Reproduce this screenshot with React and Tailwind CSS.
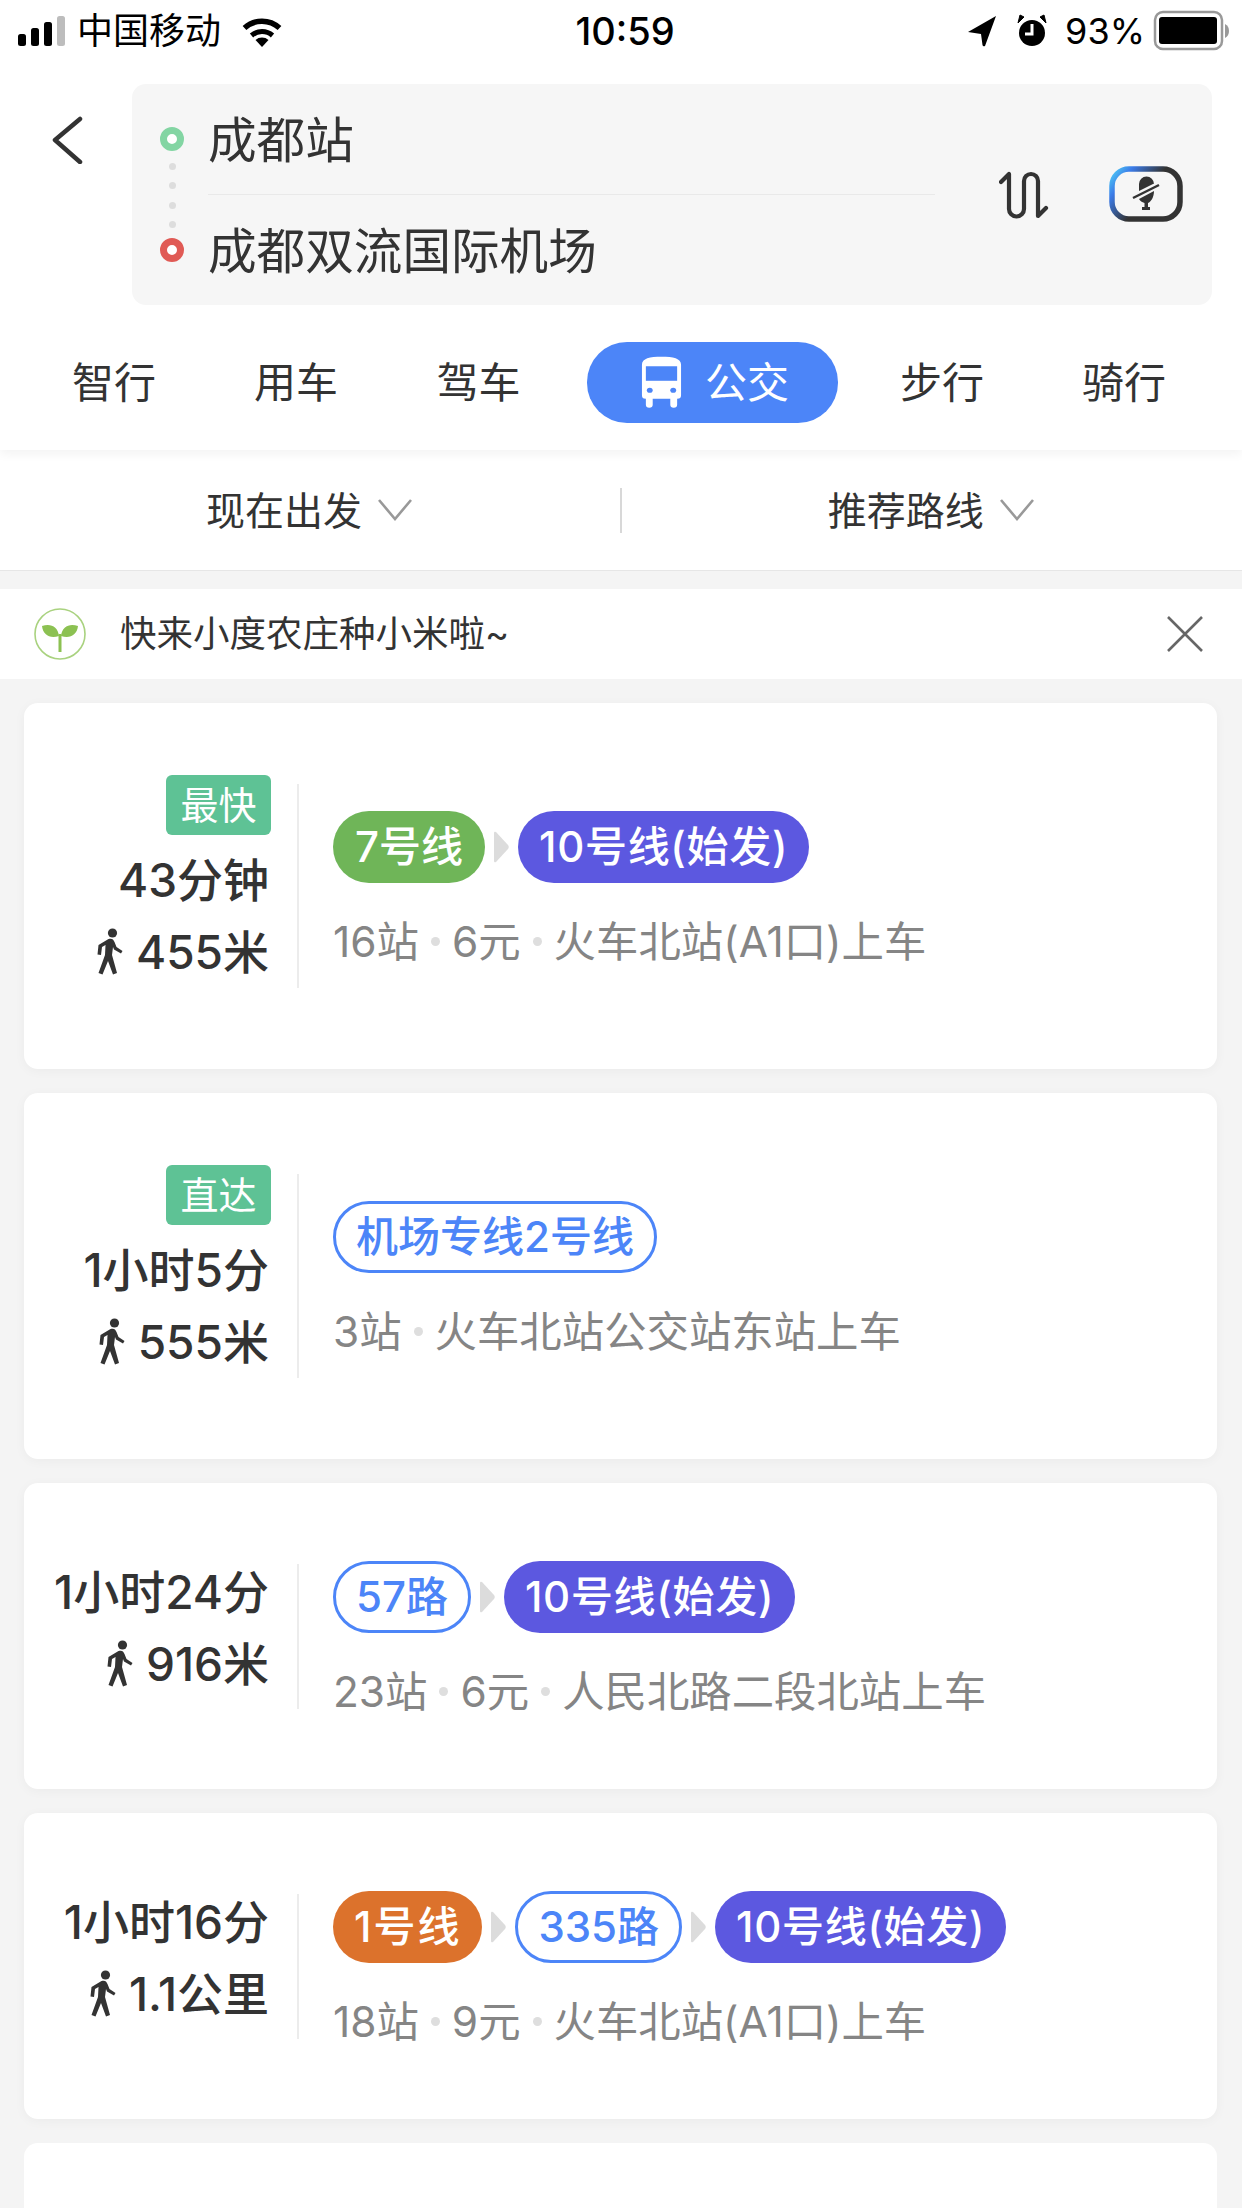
function Signal() {
  return (
    <svg width="48" height="32" viewBox="0 0 48 32" className="block">
      <rect x="0" y="19" width="8" height="12" rx="2.5" fill="#000" />
      <rect x="13" y="13" width="8" height="18" rx="2.5" fill="#000" />
      <rect x="26" y="7" width="8" height="24" rx="2.5" fill="#000" />
      <rect x="39" y="1" width="8" height="30" rx="2.5" fill="#bdbdbd" />
    </svg>
  );
}
function Wifi() {
  return (
    <svg width="42" height="34" viewBox="0 0 42 34" className="block ml-[20px]">
      <path d="M21 33 L14.5 26 A10 10 0 0 1 27.5 26 Z" fill="#000" />
      <path d="M10.5 21.5 A16 16 0 0 1 31.5 21.5" fill="none" stroke="#000" strokeWidth="5" />
      <path d="M3.5 14 A26 26 0 0 1 38.5 14" fill="none" stroke="#000" strokeWidth="5.5" />
    </svg>
  );
}
function Walk({ className = "" }) {
  return (
    <svg width="28" height="48" viewBox="0 0 27 48" className={className} fill="#333">
      <circle cx="16" cy="5" r="4.6" />
      <path d="M12 11 C15 10 17 11 18 14 L20 19 L26 23 L24.5 25.5 L17.5 21.5 L16.5 19 L15.5 27 L20.5 45 L16.5 46.5 L11.5 33 L6 46.5 L2 45 L8.5 27 L9 17 L5.5 19 L4.5 27 L1 26.5 L2 17 Z" />
    </svg>
  );
}
function Arrow() {
  return (
    <svg width="15" height="32" viewBox="0 0 15 32" className="mx-[9px] shrink-0" fill="#dcdcdc">
      <path d="M0 2 Q0 0 2 1 L14 14 Q15.5 16 14 18 L2 31 Q0 32 0 30 Z" />
    </svg>
  );
}
function Dot() {
  return <span className="inline-block w-[9px] h-[9px] rounded-full bg-[#dedede] mx-[12px] mb-[6px] align-middle" />;
}
function Pill({ children, color }) {
  const styles = {
    green: "px-[22px] bg-[#6fb558] text-white",
    purple: "px-[21px] tracking-[0.7px] bg-[#5c58e0] text-white",
    orange: "px-[21px] tracking-[2px] bg-[#dc722c] text-white",
    blue: "px-[20px] bg-white text-[#4c85f8] border-[3px] border-[#4c85f8]",
  };
  return (
    <div className={`h-[72px] rounded-[36px] flex items-center text-[42px] font-medium leading-none whitespace-nowrap shrink-0 ${styles[color]}`}>
      {children}
    </div>
  );
}
function Card({ badge, time, dist, lines, sub, short }) {
  return (
    <div className={`mx-[24px] w-[1193px] ${short ? "h-[306px]" : "h-[366px]"} bg-white rounded-[14px] shadow-[0_2px_12px_rgba(0,0,0,0.04)] flex items-center shrink-0`}>
      <div className={`w-[275px] ${badge ? "h-[204px]" : "h-[145px] pb-[9px]"} border-r-[2.5px] border-[#ececec] pr-[28px] flex flex-col items-end justify-end text-[46px] font-medium text-[#333] leading-[72px] whitespace-nowrap`}>
        {badge && (
          <div className="w-[105px] h-[60px] -mr-[2px] mb-[9px] rounded-[6px] bg-[#5ec295] text-white text-[38px] font-normal leading-[60px] text-center">
            {badge}
          </div>
        )}
        <div>{time}</div>
        <div className="flex items-center">
          <Walk className="mr-[12px]" />
          {dist}
        </div>
      </div>
      <div className="pl-[34px] pt-[3px] flex flex-col">
        <div className="flex items-center">
          {lines.map((l, i) => (
            <div key={i} className="flex items-center">
              {i > 0 && <Arrow />}
              <Pill color={l[1]}>{l[0]}</Pill>
            </div>
          ))}
        </div>
        <div className="mt-[36px] text-[42.4px] leading-[46px] text-[#858585] whitespace-nowrap">
          {sub.map((s, i) => (
            <span key={i}>
              {i > 0 && <Dot />}
              {s}
            </span>
          ))}
        </div>
      </div>
    </div>
  );
}
function Chevron() {
  return (
    <svg width="34" height="22" viewBox="0 0 34 22" className="ml-[16px]" fill="none" stroke="#999" strokeWidth="2.6">
      <path d="M1 1 L17 20 L33 1" />
    </svg>
  );
}
export default function App() {
  return (
    <div className="w-[1242px] h-[2208px] overflow-hidden bg-[#f4f4f4] flex flex-col font-['Inter','Noto_Sans_CJK_SC',sans-serif]">
      <div className="bg-white h-[450px] shrink-0 flex flex-col shadow-[0_4px_10px_rgba(0,0,0,0.05)] relative z-10">
        {/* status bar */}
        <div className="h-[62px] flex items-center px-[18px] text-[36px] text-black leading-none">
          <div className="flex-1 flex items-center">
            <Signal />
            <span className="ml-[11px]">中国移动</span>
            <Wifi />
          </div>
          <div className="font-medium text-[38px] ml-[8px]">10:59</div>
          <div className="flex-1 flex items-center justify-end">
            <svg width="28" height="32" viewBox="0 0 28 32">
              <path d="M0 17 L28 1 L17 31 Q15 32 14.5 30 L13 19 Z" fill="#000" />
            </svg>
            <svg width="30" height="34" viewBox="0 0 30 34" className="ml-[21px]">
              <circle cx="15" cy="19" r="13" fill="#000" />
              <path d="M15 10 V20 H8" stroke="#fff" strokeWidth="3" fill="none" />
              <path d="M1 9 L7 3 L3 1 Z M29 9 L23 3 L27 1 Z" fill="#000" stroke="#000" strokeWidth="1" />
            </svg>
            <span className="ml-[18px]">93%</span>
            <svg width="77" height="42" viewBox="0 0 77 42" className="ml-[8px] mr-[-6px]">
              <rect x="2" y="2" width="67" height="37" rx="8" fill="none" stroke="#999" strokeWidth="2.5" />
              <rect x="6" y="7" width="58" height="27" rx="3" fill="#000" />
              <path d="M72 14 Q76 16 76 21 Q76 26 72 28 Z" fill="#999" />
            </svg>
          </div>
        </div>
        {/* search */}
        <div className="mt-[22px] flex items-start pr-[30px]">
          <div className="w-[132px] pl-[52px] pt-[32px] shrink-0">
            <svg width="32" height="48" viewBox="0 0 32 48" fill="none" stroke="#333" strokeWidth="4.5" strokeLinecap="round" strokeLinejoin="round">
              <path d="M28 3 L3 24 L28 46" />
            </svg>
          </div>
          <div className="w-[1080px] h-[221px] rounded-[14px] bg-[#f6f6f6] flex items-center">
            <div className="w-[76px] pl-[4px] shrink-0 flex flex-col items-center">
              <div className="w-[24px] h-[24px] rounded-full border-[7px] border-[#83d5a3] bg-white" />
              <div className="flex flex-col gap-[12.5px] mt-[12px] mb-[10px]">
                <div className="w-[7px] h-[7px] rounded-full bg-[#dddddd]" />
                <div className="w-[7px] h-[7px] rounded-full bg-[#dddddd]" />
                <div className="w-[7px] h-[7px] rounded-full bg-[#dddddd]" />
                <div className="w-[7px] h-[7px] rounded-full bg-[#dddddd]" />
              </div>
              <div className="w-[24px] h-[24px] rounded-full border-[7px] border-[#e05a55] bg-white" />
            </div>
            <div className="w-[727px] text-[48.6px] text-[#333] leading-none">
              <div className="h-[110px] flex items-center border-b-[1.5px] border-[#e9e9e9] pt-[4px]">成都站</div>
              <div className="h-[110px] flex items-center pt-[5px]">成都双流国际机场</div>
            </div>
            <svg width="50" height="48" viewBox="0 0 50 48" className="ml-[64px]" fill="none" stroke="#333" strokeWidth="4.2" strokeLinecap="round" strokeLinejoin="round">
              <path d="M2 11 L10 3 V38 A7.5 7.5 0 0 0 25 38 V10 A7 7 0 0 1 39 10 V45 L47 37" />
            </svg>
            <svg width="74" height="56" viewBox="0 0 74 56" className="ml-[60px] -mt-[2px]">
              <defs>
                <linearGradient id="vg" x1="0" y1="0" x2="1" y2="0.55">
                  <stop offset="0" stopColor="#4fd0f7" />
                  <stop offset="0.22" stopColor="#3b7be8" />
                  <stop offset="0.6" stopColor="#333" />
                  <stop offset="1" stopColor="#333" />
                </linearGradient>
              </defs>
              <rect x="3" y="3" width="68" height="50" rx="17" fill="none" stroke="url(#vg)" strokeWidth="5.5" />
              <path d="M30 25 V18 A7.5 7.5 0 0 1 45 18 V17.5 Z" fill="#333" />
              <path d="M24 32 L50 19" stroke="#333" strokeWidth="2.4" fill="none" />
              <path d="M30 33 L45 25 C45 31 42 36 39 37 V41 H41 V44 H33 V41 H35.5 V37 C33 36 31 35 30 33 Z" fill="#333" />
            </svg>
          </div>
        </div>
        {/* tabs */}
        <div className="flex-1 flex items-center pl-[23px] text-[42px] text-[#333] leading-none pt-[10px]">
          <div className="w-[182px] text-center">智行</div>
          <div className="w-[182px] text-center">用车</div>
          <div className="w-[183px] text-center">驾车</div>
          <div className="ml-[17px] mr-[13px] w-[251px] h-[81px] rounded-[40px] bg-[#4c85f8] text-white flex items-center pl-[53px]">
            <svg width="43" height="53" viewBox="0 0 44 62" preserveAspectRatio="none" className="shrink-0">
              <path d="M2 10 C2 3 10 1 22 1 C34 1 42 3 42 10 V46 C42 49 41 50 38 50 V57 A3.5 3.5 0 0 1 31 57 V50 H13 V57 A3.5 3.5 0 0 1 6 57 V50 C3 50 2 49 2 46 Z" fill="#fff" />
              <rect x="6" y="12" width="32" height="17" fill="#4c85f8" />
              <circle cx="10" cy="40" r="3" fill="#4c85f8" />
              <circle cx="34" cy="40" r="3" fill="#4c85f8" />
            </svg>
            <span className="ml-[22px]">公交</span>
          </div>
          <div className="w-[182px] text-center">步行</div>
          <div className="w-[182px] text-center">骑行</div>
        </div>
      </div>
      {/* filter */}
      <div className="h-[121px] shrink-0 bg-white border-b-[1.5px] border-[#e6e6e6] flex items-center text-[39px] text-[#333] leading-none">
        <div className="flex-1 flex items-center justify-center pr-[2px]">现在出发<Chevron /></div>
        <div className="w-[1.5px] h-[45px] bg-[#d8d8d8]" />
        <div className="flex-1 flex items-center justify-center pr-[2px]">推荐路线<Chevron /></div>
      </div>
      {/* notice */}
      <div className="mt-[18px] h-[90px] shrink-0 bg-white flex items-center pl-[34px] pr-[39px] text-[36.5px] text-[#333] leading-none">
        <svg width="52" height="52" viewBox="0 0 52 52" className="shrink-0">
          <circle cx="26" cy="26" r="25" fill="#fff" stroke="#a9d27f" strokeWidth="1.6" />
          <path d="M8 18 C16 15 24 18 25 28 C16 31 9 27 8 18 Z M44 18 C36 15 28 18 27 28 C36 31 43 27 44 18 Z" fill="#8cc152" />
          <rect x="24.5" y="26" width="3" height="18" fill="#8cc152" />
        </svg>
        <span className="ml-[34px] flex-1">快来小度农庄种小米啦~</span>
        <svg width="36" height="36" viewBox="0 0 36 36" stroke="#666" strokeWidth="2.6">
          <path d="M1 1 L35 35 M35 1 L1 35" />
        </svg>
      </div>
      {/* cards */}
      <div className="mt-[24px] flex flex-col gap-[24px]">
        <Card badge="最快" time="43分钟" dist="455米" lines={[["7号线", "green"], ["10号线(始发)", "purple"]]} sub={["16站", "6元", "火车北站(A1口)上车"]} />
        <Card badge="直达" time="1小时5分" dist="555米" lines={[["机场专线2号线", "blue"]]} sub={["3站", "火车北站公交站东站上车"]} />
        <Card short time="1小时24分" dist="916米" lines={[["57路", "blue"], ["10号线(始发)", "purple"]]} sub={["23站", "6元", "人民北路二段北站上车"]} />
        <Card short time="1小时16分" dist="1.1公里" lines={[["1号线", "orange"], ["335路", "blue"], ["10号线(始发)", "purple"]]} sub={["18站", "9元", "火车北站(A1口)上车"]} />
        <div className="mx-[24px] w-[1193px] h-[200px] bg-white rounded-[14px] shrink-0" />
      </div>
    </div>
  );
}
